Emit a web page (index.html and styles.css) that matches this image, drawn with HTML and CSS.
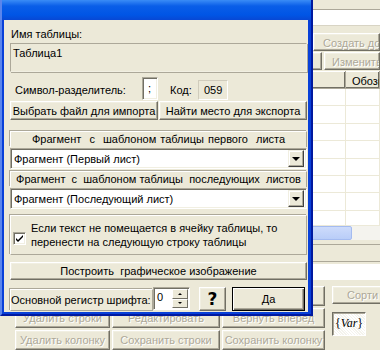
FILE: index.html
```html
<html>
  <head>
    <title>Импорт таблицы</title>
    <link rel="stylesheet" href="styles.css">
  </head>
  <body>
    <!-- Main window behind the dialog -->
    <div class="app">
      <div class="app-top"></div>
      <div class="app-band"></div>
      <div class="toolbar">
        <div class="tb-row">
          <button class="btn dis tb-create">Создать документ</button>
        </div>
        <div class="tb-row">
          <button class="btn dis tb-small"></button>
          <button class="btn dis tb-edit">Изменить</button>
        </div>
      </div>
      <table class="grid">
        <thead>
          <tr><th class="c1"></th><th>Обозн</th></tr>
        </thead>
        <tbody>
          <tr><td class="c1"></td><td></td></tr>
          <tr><td class="c1"></td><td></td></tr>
          <tr><td class="c1"></td><td></td></tr>
          <tr><td class="c1"></td><td></td></tr>
          <tr><td class="c1"></td><td></td></tr>
          <tr><td class="c1"></td><td></td></tr>
          <tr><td class="c1"></td><td></td></tr>
          <tr><td class="c1"></td><td></td></tr>
        </tbody>
      </table>
      <div class="hscroll"><div class="thumb"></div></div>
      <div class="app-panel"></div>
      <div class="app-field"></div>
      <div class="app-buttons">
        <div class="btn-grid">
          <!-- first row sits behind the dialog -->
          <button class="btn dis"></button>
          <button class="btn dis"></button>
          <button class="btn dis"></button>
          <button class="btn dis">Удалить строки</button>
          <button class="btn dis">Редактировать</button>
          <button class="btn dis">Вернуть вперед</button>
          <button class="btn dis">Удалить колонку</button>
          <button class="btn dis">Сохранить строки</button>
          <button class="btn dis">Сохранить колонку</button>
        </div>
        <div class="side-col">
          <button class="btn dis sort">Сорти</button>
          <button class="btn var"><span class="var-text">{<i>Var</i>}</span></button>
        </div>
      </div>
    </div>

    <!-- Import dialog window -->
    <div class="dialog">
      <div class="titlebar"></div>
      <div class="client">
        <div class="lbl name-lbl">Имя таблицы:</div>
        <div class="memo">Таблица1</div>

        <div class="sep-row">
          <span class="lbl sep-lbl">Символ-разделитель:</span>
          <span class="edit sep-edit">;</span>
          <span class="lbl code-lbl">Код:</span>
          <span class="static code-val">059</span>
        </div>

        <div class="file-row">
          <button class="btn">Выбрать файл для импорта</button>
          <button class="btn">Найти место для экспорта</button>
        </div>

        <div class="frag first">
          <div class="frag-head wide">Фрагмент  с  шаблоном таблицы первого  листа</div>
          <div class="combo">
            <span class="combo-text">Фрагмент (Первый лист)</span>
            <span class="combo-btn"><span class="arrow"></span></span>
          </div>
        </div>
        <div class="frag">
          <div class="frag-head">Фрагмент  с  шаблоном таблицы  последующих  листов</div>
          <div class="combo">
            <span class="combo-text">Фрагмент (Последующий лист)</span>
            <span class="combo-btn"><span class="arrow"></span></span>
          </div>
        </div>

        <div class="wrap-box">
          <span class="check">
            <svg width="9" height="9" viewBox="0 0 9 9"><path d="M1 4 L3 6 L8 1 L8 3 L3 8 L1 6 Z" fill="#000"/></svg>
          </span>
          <span class="wrap-text">Если текст не помещается в ячейку таблицы, то перенести на следующую строку таблицы</span>
        </div>

        <button class="btn build">Построить  графическое изображение</button>

        <div class="bottom-row">
          <div class="font-lbl">Основной регистр шрифта:</div>
          <div class="spin">
            <span class="spin-val">0</span>
            <span class="spin-btns">
              <span class="spin-b"><span class="up"></span></span>
              <span class="spin-b"><span class="down"></span></span>
            </span>
          </div>
          <button class="btn help">?</button>
          <button class="btn ok">Да</button>
        </div>
      </div>
    </div>
  </body>
</html>
```

FILE: styles.css
```css
* {
  box-sizing: border-box;
}
body {
  margin: 0;
  width: 380px;
  height: 350px;
  overflow: hidden;
  position: relative;
  background-color: #ece9d8;
  font-family: "Liberation Sans", Arial, sans-serif;
  font-size: 11px;
  color: #000000;
}

/* classic raised button */
.btn {
  display: block;
  margin: 0;
  padding: 0;
  font: inherit;
  color: #000000;
  background-color: #ece9d8;
  border: 1px solid;
  border-color: #ffffff #716f64 #716f64 #ffffff;
  box-shadow: inset -1px -1px 0 #aca899, inset 1px 1px 0 #f1efe2;
  white-space: pre;
  overflow: hidden;
}
.btn.dis {
  color: #aca899;
  text-shadow: 1px 1px 0 #ffffff;
}

/* ---------- main window ---------- */
.app {
  display: flex;
  flex-direction: column;
  width: 380px;
  height: 350px;
  overflow: hidden;
}
.app-top {
  height: 10px;
  border-bottom: 1px solid #aca899;
}
.app-band {
  height: 17px;
  background-color: #ffffff;
  border-bottom: 1px solid #d8d4c4;
}
.toolbar {
  padding-top: 7px;
}
.tb-row {
  display: flex;
  height: 19px;
}
.tb-row .btn {
  padding-top: 2px;
}
.tb-create {
  margin-left: 313px;
  width: 67px;
  height: 18px;
  text-align: left;
  padding-left: 9px;
}
.tb-small {
  margin-left: 250px;
  width: 72px;
  height: 18px;
}
.tb-edit {
  margin-left: 2px;
  width: 56px;
  height: 18px;
  text-align: left;
  padding-left: 7px;
}
.grid {
  border-collapse: collapse;
  width: 380px;
  background-color: #ffffff;
  table-layout: fixed;
  font: inherit;
}
.grid th {
  height: 17px;
  background-color: #ece9d8;
  font-weight: normal;
  text-align: left;
  padding: 2px 0 0 6px;
  border: 1px solid #aca899;
  border-top-color: #ffffff;
  border-left-color: #ffffff;
  box-shadow: inset -1px -1px 0 #716f64;
  white-space: nowrap;
  overflow: hidden;
}
.grid td {
  height: 17.4px;
  padding: 0;
  border-right: 1px solid #ece9d8;
  border-bottom: 1px solid #ece9d8;
}
.grid .c1 {
  width: 345px;
}
.hscroll {
  height: 15px;
  margin-top: -3px;
  background-color: #f4f3ee;
  border-top: 1px solid #ece9d8;
}
.thumb {
  width: 352px;
  height: 14px;
  background: linear-gradient(#cddbfb, #b9cdf8);
  border: 1px solid #a4bbf0;
  border-radius: 2px;
}
.app-panel {
  height: 18px;
  border-top: 1px solid #aca899;
  border-bottom: 1px solid #aca899;
  margin-top: 4px;
}
.app-field {
  height: 17px;
  margin-top: 2px;
  background-color: #ffffff;
}
.app-buttons {
  display: flex;
  padding: 6px 0 0 15px;
}
.btn-grid {
  display: grid;
  grid-template-columns: 95px 108px 103px;
  grid-auto-rows: 20px;
  column-gap: 2px;
  row-gap: 2px;
}
.btn-grid .btn {
  height: 20px;
  width: 100%;
}
.side-col {
  display: flex;
  flex-direction: column;
  margin-left: 7px;
}
.sort {
  width: 52px;
  height: 18px;
  text-align: left;
  padding-left: 14px;
}
.var {
  margin-top: 8px;
  width: 34px;
  height: 24px;
  border-color: #716f64 #ffffff #ffffff #716f64;
  box-shadow: inset 1px 1px 0 #aca899;
  background-color: #f4f3ec;
  background-image: repeating-linear-gradient(45deg, #ffffff 0 1px, transparent 1px 2px);
  font-family: "Liberation Serif", serif;
  font-size: 12px;
}

/* ---------- dialog ---------- */
.dialog {
  position: absolute;
  left: 0;
  top: 0;
  width: 313px;
  height: 316px;
  display: flex;
  flex-direction: column;
  background-color: #0840d8;
  border-left: 2px solid #5a85ec;
  border-right: 2px solid #0019a0;
  border-bottom: 2px solid #0019a0;
  padding: 0 3px 2px 2px;
}
.titlebar {
  height: 20px;
  margin: 0 -3px 0 -2px;
  background: linear-gradient(#3a8cf6, #0a5ee8 30%, #0055e5 75%, #0848d4);
}
.client {
  flex: 1;
  background-color: #ece9d8;
  padding: 7px 1px 0 6px;
  display: flex;
  flex-direction: column;
}
.lbl {
  line-height: 14px;
}
.name-lbl {
  padding-left: 1px;
}
.memo {
  margin-top: 2px;
  height: 29px;
  border: 1px solid #aca899;
  border-right-color: #f1efe2;
  border-bottom-color: #f1efe2;
  box-shadow: 1px 1px 0 #aca899;
  padding: 2px 0 0 2px;
  line-height: 14px;
}
.sep-row {
  display: flex;
  align-items: flex-end;
  height: 24px;
  margin-top: 4px;
}
.sep-lbl {
  width: 132px;
  padding-left: 5px;
  line-height: 20px;
}
.edit {
  background-color: #ffffff;
  border: 1px solid;
  border-color: #aca899 #ffffff #ffffff #aca899;
  box-shadow: inset 1px 1px 0 #716f64, inset -1px -1px 0 #f1efe2;
}
.sep-edit {
  width: 16px;
  height: 23px;
  padding: 3px 0 0 5px;
  overflow: hidden;
  line-height: 14px;
}
.code-lbl {
  margin-left: 12px;
  width: 28px;
  line-height: 20px;
}
.static {
  border: 1px solid;
  border-color: #d0ccbc #ffffff #ffffff #d0ccbc;
}
.code-val {
  width: 30px;
  height: 20px;
  line-height: 18px;
  padding-left: 5px;
}
.file-row {
  display: grid;
  grid-template-columns: 148px 148px;
  column-gap: 1px;
  margin-top: 1px;
}
.file-row .btn {
  height: 19px;
}
.frag {
  display: flex;
  flex-direction: column;
}
.frag.first {
  margin-top: 11px;
}
.frag + .frag {
  margin-top: 2px;
}
.frag-head {
  height: 16px;
  line-height: 15px;
  text-align: center;
  white-space: pre;
  border-top: 1px solid #ffffff;
  border-left: 1px solid #ffffff;
  border-right: 1px solid #aca899;
  box-shadow: -1px -1px 0 #aca899;
}
.frag-head.wide {
  word-spacing: 1px;
}
.combo {
  display: flex;
  align-items: center;
  height: 21px;
  margin-top: 1px;
  background-color: #ffffff;
  border: 1px solid;
  border-color: #aca899 #ffffff #ffffff #aca899;
  box-shadow: inset 1px 1px 0 #716f64, inset -1px -1px 0 #f1efe2;
  padding: 0 2px 0 3px;
}
.combo-text {
  flex: 1;
}
.combo-btn {
  width: 16px;
  height: 17px;
  display: flex;
  align-items: center;
  justify-content: center;
  background-color: #ece9d8;
  border: 1px solid;
  border-color: #f1efe2 #404040 #404040 #f1efe2;
  box-shadow: inset -1px -1px 0 #aca899, inset 1px 1px 0 #ffffff;
}
.arrow {
  width: 0;
  height: 0;
  border-left: 4px solid transparent;
  border-right: 4px solid transparent;
  border-top: 4px solid #000000;
}
.wrap-box {
  display: flex;
  align-items: center;
  margin-top: 6px;
  height: 40px;
  border: 1px solid;
  border-color: #ffffff #aca899 #aca899 #ffffff;
  box-shadow: -1px -1px 0 #aca899;
  padding-left: 2px;
}
.check {
  width: 13px;
  height: 13px;
  display: flex;
  align-items: center;
  justify-content: center;
  background-color: #ffffff;
  border: 1px solid;
  border-color: #aca899 #ffffff #ffffff #aca899;
  box-shadow: inset 1px 1px 0 #716f64, inset -1px -1px 0 #f1efe2;
  margin-right: 5px;
  margin-top: 6px;
}
.wrap-text {
  flex: 1;
  line-height: 14px;
}
.build {
  margin-top: 7px;
  height: 18px;
}
.bottom-row {
  display: flex;
  align-items: flex-start;
  margin-top: 7px;
}
.font-lbl {
  width: 143px;
  height: 22px;
  margin-top: 2px;
  line-height: 20px;
  border: 1px solid;
  border-color: #ffffff #aca899 #aca899 #ffffff;
  box-shadow: -1px -1px 0 #aca899;
  white-space: nowrap;
  overflow: hidden;
}
.spin {
  display: flex;
  width: 37px;
  height: 23px;
  background-color: #ffffff;
  border: 1px solid;
  border-color: #aca899 #ffffff #ffffff #aca899;
  box-shadow: inset 1px 1px 0 #716f64;
}
.spin-val {
  flex: 1;
  padding: 2px 0 0 3px;
  line-height: 14px;
}
.spin-btns {
  display: flex;
  flex-direction: column;
  width: 17px;
  padding: 1px 1px 1px 0;
}
.spin-b {
  flex: 1;
  display: flex;
  align-items: center;
  justify-content: center;
  background-color: #ece9d8;
  border: 1px solid;
  border-color: #ffffff #716f64 #716f64 #ffffff;
}
.up, .down {
  width: 0;
  height: 0;
  border-left: 2px solid transparent;
  border-right: 2px solid transparent;
}
.up {
  border-bottom: 2px solid #000000;
}
.down {
  border-top: 2px solid #000000;
}
.help {
  margin-left: 9px;
  width: 27px;
  height: 24px;
  font-family: "DejaVu Sans", sans-serif;
  font-weight: bold;
  font-size: 17px;
}
.ok {
  margin-left: 6px;
  width: 73px;
  height: 24px;
  border: 1px solid #000000;
  box-shadow: inset 1px 1px 0 #ffffff, inset -1px -1px 0 #716f64, inset -2px -2px 0 #aca899;
}
```
